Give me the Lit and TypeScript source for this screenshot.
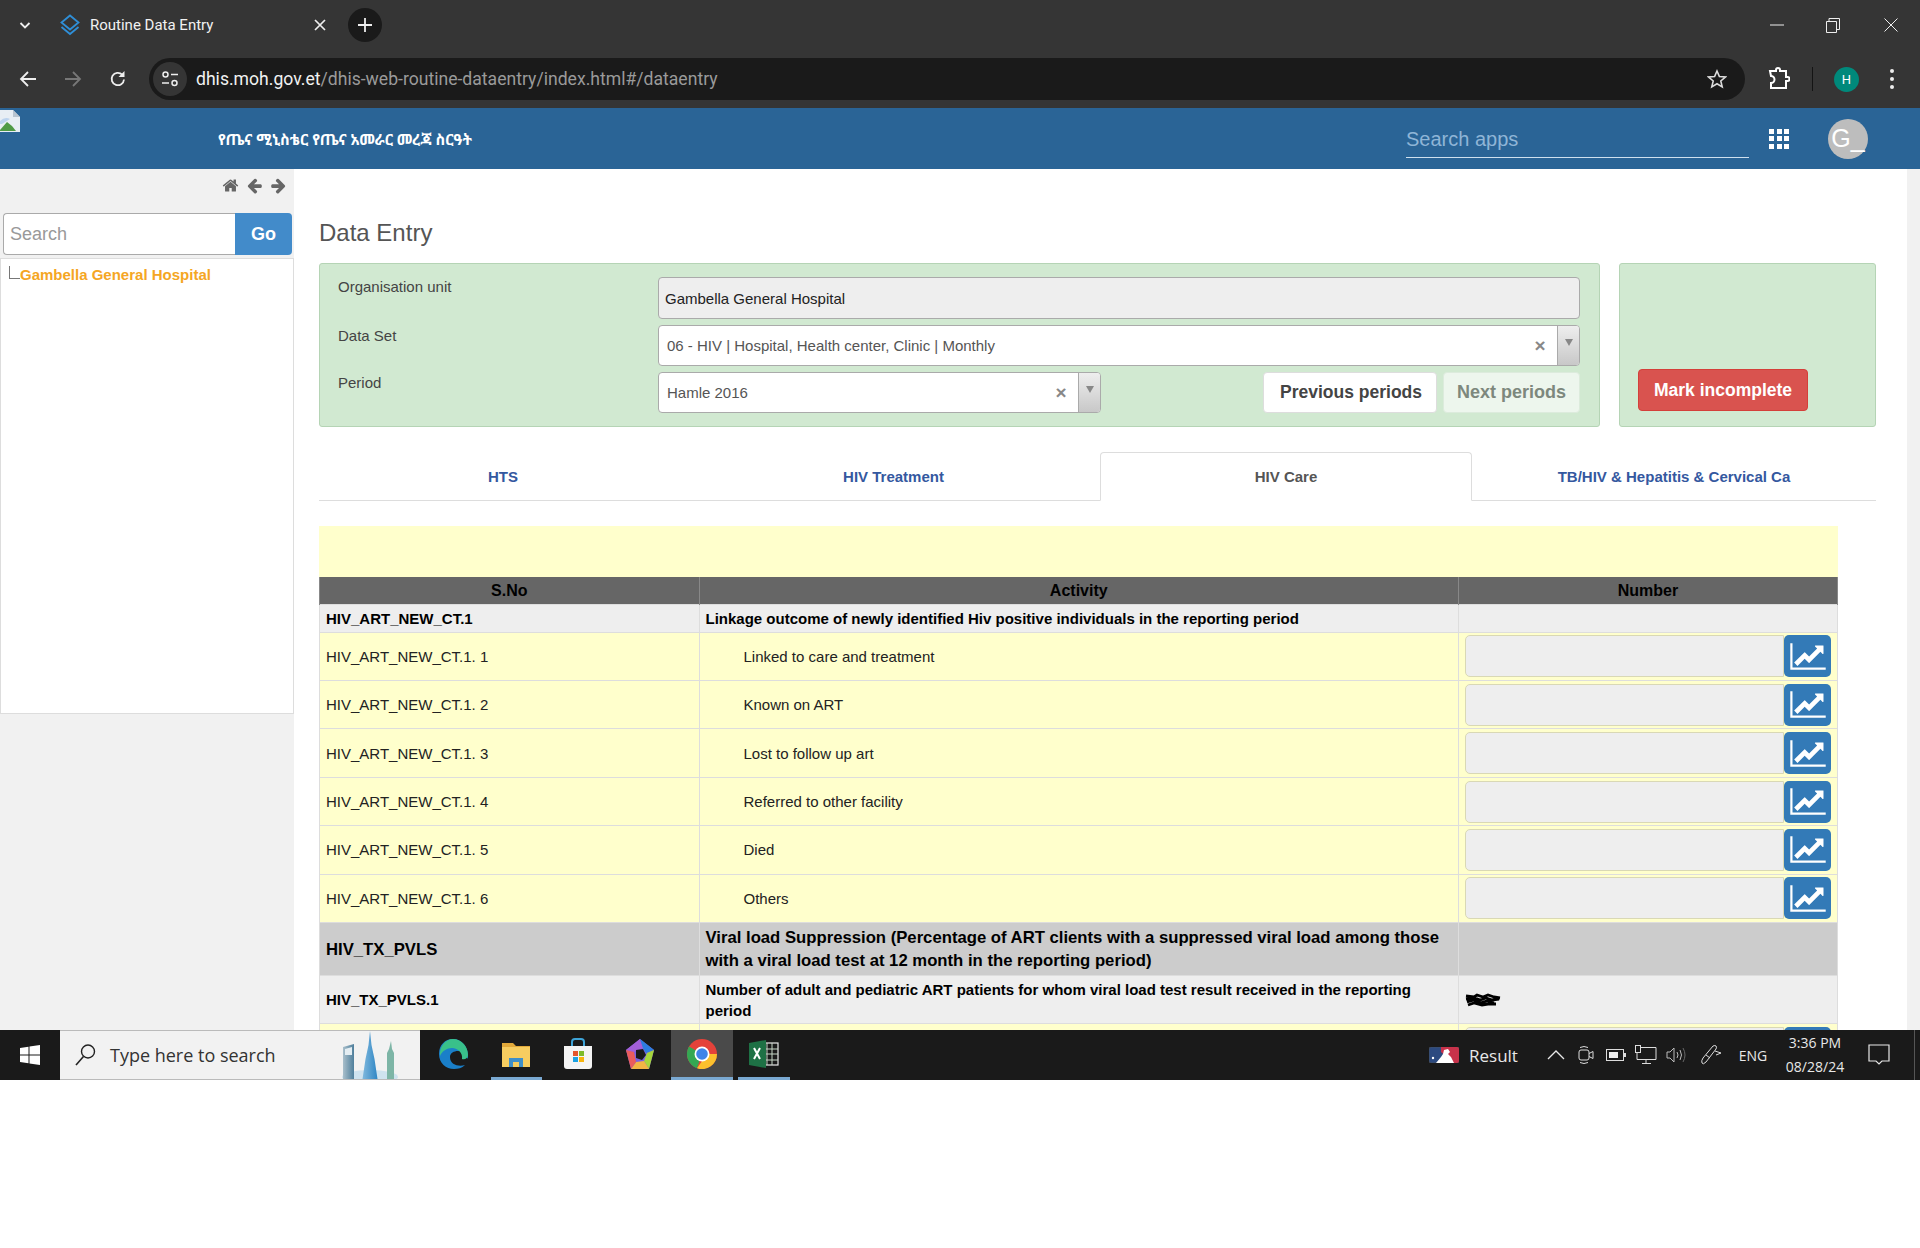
import { LitElement, html, css } from 'lit';
import { customElement } from 'lit/decorators.js';

const LINE_CHART = 'M2048 1536v128h-2048v-1536h128v1408h1920zm-128-1248v435q0 21-19.5 29.5t-35.5-7.5l-121-121-633 633q-10 10-23 10t-23-10l-233-233-416 416-192-192 585-585q10-10 23-10t23 10l233 233 464-464-121-121q-16-16-7.5-35.5t29.5-19.5h435q14 0 23 9t9 23z';
const FA_HOME = 'M1472 992v480q0 26-19 45t-45 19h-384v-384h-256v384h-384q-26 0-45-19t-19-45v-480q0-1 .5-3t.5-3l575-474 575 474q1 2 1 6zm223-69l-62 74q-8 9-21 11h-3q-13 0-21-7l-692-577-692 577q-12 8-24 7-13-2-21-11l-62-74q-8-10-7-23.5t11-21.5l719-599q32-26 76-26t76 26l244 204v-195q0-14 9-23t23-9h192q14 0 23 9t9 23v408l219 182q10 8 11 21.5t-7 23.5z';
const FA_LEFT = 'M1664 896v128q0 53-32.5 90.5t-84.5 37.5h-704l293 294q38 36 38 90t-38 90l-75 76q-37 37-90 37-52 0-91-37l-651-652q-37-37-37-90 0-52 37-91l651-650q38-38 91-38 52 0 90 38l75 74q38 38 38 91t-38 91l-293 293h704q52 0 84.5 37.5t32.5 90.5z';
const FA_RIGHT = 'M1600 960q0 54-37 91l-651 651q-39 37-91 37-51 0-90-37l-75-75q-38-38-38-91t38-91l293-293h-704q-52 0-84.5-37.5t-32.5-90.5v-128q0-53 32.5-90.5t84.5-37.5h704l-293-294q-38-36-38-90t38-90l75-75q38-38 90-38 53 0 91 38l651 651q37 35 37 90z';

const ART_ROWS = [
  'Linked to care and treatment',
  'Known on ART',
  'Lost to follow up art',
  'Referred to other facility',
  'Died',
  'Others',
];

@customElement('app-root')
export class AppRoot extends LitElement {
  static styles = css`
    :host {
      display: block;
      width: 1920px;
      height: 1248px;
      background: #fff;
      font-family: "Liberation Sans", Arial, sans-serif;
      overflow: hidden;
    }

    svg { display: block; }

    /* browser frame */
    .browser { height: 108px; background: #353535; color: #fff; }
    .tabstrip { height: 50px; display: flex; align-items: center; }
    .icon-box { display: flex; align-items: center; justify-content: center; flex: none; }
    .tab-list { width: 50px; height: 50px; }
    .tab {
      width: 290px;
      display: flex;
      align-items: center;
      padding-left: 10px;
      box-sizing: border-box;
      font: 15px Roboto, sans-serif;
      color: #f1f1f1;
    }
    .tab .title { margin-left: 10px; flex: 1; }
    .tab .x { width: 40px; }
    .newtab { width: 34px; height: 34px; margin-left: 8px; border-radius: 50%; background: #1a1a1a; }
    .winctl { margin-left: auto; display: flex; padding-right: 1px; }
    .winctl .icon-box { width: 56px; height: 40px; }
    .winctl .icon-box:last-child { margin-left: 2px; }

    .toolbar { height: 58px; display: flex; align-items: center; }
    .nav { width: 45px; height: 42px; }
    .nav.first { margin-left: 5px; }
    .omnibox {
      width: 1596px;
      height: 42px;
      margin: 0 0 0 9px;
      background: #1a1a1a;
      border-radius: 21px;
      display: flex;
      align-items: center;
      padding: 0 18px 0 4px;
      box-sizing: border-box;
    }
    .site { width: 34px; height: 34px; border-radius: 50%; background: #353535; }
    .url { margin-left: 9px; font: 17.6px Roboto, sans-serif; color: #9a9a9a; white-space: nowrap; }
    .url b { font-weight: 400; color: #f1f1f1; }
    .star { margin-left: auto; }
    .tools { display: flex; align-items: center; }
    .puzzle { width: 34px; margin-left: 17px; }
    .divider { width: 1px; height: 24px; background: #141414; margin: 0 0 0 16px; }
    .profile {
      width: 25px;
      height: 25px;
      margin-left: 21px;
      border-radius: 50%;
      background: #00897b;
      font: 13px Roboto, sans-serif;
    }
    .menu { width: 28px; margin-left: 19px; }

    /* dhis2 app */
    .screen { height: 922px; display: flex; flex-direction: column; overflow: hidden; }
    .appbar { height: 61px; flex: none; background: #2a6496; display: flex; align-items: center; color: #fff; }
    .broken { align-self: flex-start; margin-top: 2px; flex: none; }
    .brand {
      margin-left: 198px;
      width: 400px;
      font: bold 15px "Noto Sans Ethiopic", "DejaVu Sans", "Noto Sans", sans-serif;
      color: #fff;
      white-space: nowrap;
    }
    .appsearch {
      margin-left: 788px;
      width: 343px;
      height: 50px;
      align-self: flex-start;
      box-sizing: border-box;
      border-bottom: 1px solid #cfe0ee;
      font-size: 20px;
      color: #8fb5d6;
      display: flex;
      align-items: center;
      padding-top: 14px;
    }
    .appgrid { margin-left: 20px; width: 20px; display: grid; grid-template-columns: repeat(3, 5px); gap: 2.5px; }
    .appgrid i { height: 5px; background: #fff; display: block; }
    .avatar {
      margin-left: 39px;
      width: 40px;
      height: 40px;
      border-radius: 50%;
      background: #bdbdbd;
      color: #fff;
      font-size: 25px;
      display: flex;
      align-items: center;
      justify-content: center;
    }

    .content { flex: 1; display: flex; min-height: 0; }
    .side { width: 294px; flex: none; background: #f1f1f1; box-sizing: border-box; }
    .side-tools { display: flex; justify-content: flex-end; align-items: center; gap: 7px; padding: 4px 7px 0 0; box-sizing: border-box; height: 29px; }
    .side-search { display: flex; margin: 15px 2px 0 3px; height: 42px; }
    .side-search .field {
      flex: 1;
      background: #fff;
      border: 1px solid #aaa;
      border-right: none;
      border-radius: 4px 0 0 4px;
      color: #999;
      font-size: 18px;
      padding-left: 6px;
      display: flex;
      align-items: center;
    }
    .side-search .go {
      width: 57px;
      background: #428bca;
      color: #fff;
      font-weight: bold;
      font-size: 18px;
      border-radius: 0 4px 4px 0;
      display: flex;
      align-items: center;
      justify-content: center;
    }
    .tree {
      margin-top: 3px;
      height: 456px;
      background: #fff;
      border: 1px solid #ddd;
      box-sizing: border-box;
      display: flex;
      padding: 7px 0 0 8px;
      font-size: 15px;
      font-weight: bold;
      color: #f5a623;
    }
    .tree .elbow { width: 11px; height: 13px; border-left: 1px solid #777; border-bottom: 1px solid #777; box-sizing: border-box; }

    .main { flex: 1; background: #fff; padding-left: 25px; min-width: 0; overflow: hidden; }
    .scrollbar { width: 13px; flex: none; background: #f1f1f1; }
    h2 { margin: 49px 0 15px; font-size: 24px; line-height: 30px; font-weight: 400; color: #555; }
    .panels { display: flex; gap: 19px; }
    .panel { background: #d1e9d1; border: 1px solid #b5d4b5; border-radius: 3px; box-sizing: border-box; height: 164px; }
    .form {
      width: 1281px;
      padding: 13px 19px 13px 18px;
      display: grid;
      grid-template-columns: 320px 1fr;
      grid-template-rows: 42px 41px 41px;
      row-gap: 6px;
      font-size: 15px;
      color: #444;
    }
    .form label { line-height: 20px; }
    .form label.l2, .form label.l3 { padding-top: 1px; }
    .ro {
      background: #eee;
      border: 1px solid #aaa;
      border-radius: 4px;
      color: #222;
      display: flex;
      align-items: center;
      padding-left: 6px;
    }
    .chosen {
      display: flex;
      align-items: center;
      background: #fff;
      border: 1px solid #aaa;
      border-radius: 4px;
      padding-left: 8px;
      box-sizing: border-box;
      color: #555;
      overflow: hidden;
    }
    .chosen .val { flex: 1; }
    .chosen .clear { width: 34px; text-align: center; font-weight: bold; color: #888; font-size: 19px; }
    .chosen .arrow {
      width: 22px;
      align-self: stretch;
      background: linear-gradient(#eeeeee, #c8c8c8);
      border-left: 1px solid #aaa;
      box-sizing: border-box;
      display: flex;
      justify-content: center;
      padding-top: 13px;
    }
    .chosen .arrow i { width: 0; height: 0; border: 4px solid transparent; border-top: 7px solid #888; display: block; }
    .period-row { display: flex; }
    .period-row .chosen { width: 443px; }
    .pager { margin-left: auto; display: flex; gap: 6px; }
    .btn {
      border: 1px solid #ddd;
      background: #fff;
      border-radius: 4px;
      font-weight: bold;
      font-size: 17.5px;
      color: #444;
      display: flex;
      align-items: center;
      justify-content: center;
      box-sizing: border-box;
    }
    .btn.prev { width: 174px; height: 41px; padding-left: 2px; }
    .btn.next { width: 137px; height: 41px; background: #edf6ed; color: #7d887d; border-color: #dcebdc; font-size: 18px; }
    .side-panel { width: 257px; display: flex; align-items: flex-end; padding: 0 0 15px 18px; }
    .btn.mark { width: 170px; height: 42px; background: #d9534f; border-color: #d43f3a; color: #fff; }

    .tabs { display: flex; margin-top: 25px; width: 1557px; height: 49px; border-bottom: 1px solid #ddd; box-sizing: border-box; }
    .tabs a {
      display: flex;
      align-items: center;
      justify-content: center;
      font-size: 15px;
      font-weight: bold;
      color: #34589f;
      box-sizing: border-box;
    }
    .tabs a.on {
      height: 49px;
      background: #fff;
      border: 1px solid #ddd;
      border-bottom-color: #fff;
      border-radius: 4px 4px 0 0;
      color: #555;
    }

    .band { margin-top: 25px; width: 1519px; height: 51px; background: #ffffcc; }
    table { width: 1519px; table-layout: fixed; border-collapse: collapse; font-size: 15px; color: #222; }
    col.c1 { width: 379.5px; }
    col.c2 { width: 759.5px; }
    td, th { border: 1px solid #ddd; padding: 0 6px; box-sizing: border-box; }
    th { height: 27px; background: #666; color: #000; font-size: 16px; border-color: #888; border-top: none; border-bottom: none; padding-top: 2px; }
    tr.head td { height: 28px; background: #eee; font-weight: bold; color: #000; }
    tr.item td { height: 48.45px; background: #ffffcc; }
    tr.item td.sub { padding-left: 44px; }
    tr.section td { height: 53px; background: #ccc; font-weight: bold; color: #000; font-size: 16.7px; line-height: 23px; }
    tr.info td { height: 48px; background: #eee; font-weight: bold; color: #000; line-height: 21px; }
    .num { display: flex; height: 42px; }
    .num .box { flex: 1; background: #eee; border: 1px solid #d9d8b5; border-radius: 5px 0 0 5px; box-sizing: border-box; }
    .num .chart {
      width: 47px;
      background: #337ab7;
      border-radius: 5px;
      display: flex;
      align-items: center;
      justify-content: center;
      flex: none;
    }

    /* windows taskbar */
    .taskbar {
      height: 50px;
      background: #1a1a1a;
      display: flex;
      align-items: stretch;
      color: #e8e8e8;
      font-family: "Open Sans", sans-serif;
    }
    .start { width: 60px; }
    .winsearch {
      width: 360px;
      flex: none;
      background: #f2f2f2;
      border: 1px solid #bbb;
      border-width: 1px 0;
      box-sizing: border-box;
      display: flex;
      align-items: center;
      color: #333;
      font-size: 18px;
      padding-left: 15px;
      overflow: hidden;
    }
    .winsearch .hint { margin-left: 14px; flex: 1; white-space: nowrap; }
    .winsearch svg.town { align-self: flex-end; margin-right: 22px; }
    .pins { display: flex; margin-left: 3px; }
    .pin { width: 62px; box-sizing: border-box; border-bottom: 3px solid transparent; }
    .pin.open { border-bottom-color: #7aa9d2; }
    .pin.short {
      background: linear-gradient(#7aa9d2, #7aa9d2) center bottom / 51px 3px no-repeat;
      background-origin: border-box;
      background-clip: border-box;
    }
    .pin.xl { margin-left: 5px; width: 52px; }
    .pin.active { background: #4a4a4a; }
    .tray { margin-left: auto; display: flex; align-items: center; }
    .tray .result { font-size: 17px; margin-left: 10px; width: 72px; }
    .tray .t { width: 30px; }
    .tray .t.pen { margin-left: 5px; }
    .tray .eng { font-size: 14px; width: 42px; margin-left: 6px; text-align: center; }
    .clock { width: 80px; text-align: center; font-size: 14px; line-height: 24px; margin-left: 1px; }
    .notify { width: 48px; }
    .edge-line { width: 1px; height: 50px; background: #555; margin: 0 5px 0 11px; }
    .blank { height: 168px; background: #fff; }
  `;

  private chrome() {
    return html`
      <div class="browser">
        <div class="tabstrip">
          <div class="icon-box tab-list">
            <svg width="14" height="14" viewBox="0 0 14 14"><path d="M2.5 5l4.5 4.5L11.500 5" fill="none" stroke="#eee" stroke-width="1.800"/></svg>
          </div>
          <div class="tab">
            <svg width="20" height="22" viewBox="0 0 20 22"><path d="M10 1.500l8.500 7L10 15.500l-8.500-7z M1.500 13L10 20l8.500-7" fill="none" stroke="#2f8fd8" stroke-width="1.800"/></svg>
            <span class="title">Routine Data Entry</span>
            <div class="icon-box x"><svg width="12" height="12" viewBox="0 0 12 12"><path d="M1 1l10 10M11 1L1 11" stroke="#eee" stroke-width="1.700"/></svg></div>
          </div>
          <div class="icon-box newtab">
            <svg width="16" height="16" viewBox="0 0 16 16"><path d="M8 1v14M1 8h14" stroke="#eee" stroke-width="1.800"/></svg>
          </div>
          <div class="winctl">
            <div class="icon-box"><svg width="14" height="2" viewBox="0 0 14 2"><path d="M0 1h14" stroke="#eee"/></svg></div>
            <div class="icon-box"><svg width="14" height="15" viewBox="0 0 14 15"><path d="M.5 3.500h10v11H.5zM3 3.500V.5h10.500v11h-3" fill="none" stroke="#eee"/></svg></div>
            <div class="icon-box"><svg width="14" height="14" viewBox="0 0 14 14"><path d="M.5.5l13 13M13.500.5l-13 13" stroke="#eee"/></svg></div>
          </div>
        </div>
        <div class="toolbar">
          <div class="icon-box nav first"><svg width="18" height="18" viewBox="0 0 18 18"><path d="M17 9H2M9 2L2 9l7 7" fill="none" stroke="#eee" stroke-width="1.800"/></svg></div>
          <div class="icon-box nav"><svg width="18" height="18" viewBox="0 0 18 18"><path d="M1 9h15M9 2l7 7-7 7" fill="none" stroke="#777" stroke-width="1.800"/></svg></div>
          <div class="icon-box nav"><svg width="18" height="18" viewBox="0 0 18 18"><path d="M15 9.500A6.200 6.200 0 1 1 13.200 4.600" fill="none" stroke="#eee" stroke-width="1.800"/><path d="M15.500 1v6h-6z" fill="#eee"/></svg></div>
          <div class="omnibox">
            <div class="icon-box site">
              <svg width="18" height="18" viewBox="0 0 18 18"><circle cx="4.500" cy="4.500" r="2.500" fill="none" stroke="#eee" stroke-width="1.500"/><path d="M10 4.500h7M1 13h7" stroke="#eee" stroke-width="1.500"/><circle cx="13.500" cy="13" r="2.500" fill="none" stroke="#eee" stroke-width="1.500"/></svg>
            </div>
            <div class="url"><b>dhis.moh.gov.et</b>/dhis-web-routine-dataentry/index.html#/dataentry</div>
            <svg class="star" width="20" height="20" viewBox="0 0 20 20"><path d="M10 2l2.400 5.500 6 .5-4.600 4 1.400 5.900L10 14.800 4.800 17.900 6.200 12 1.600 8l6-.5z" fill="none" stroke="#ddd" stroke-width="1.600"/></svg>
          </div>
          <div class="tools">
            <div class="icon-box puzzle">
              <svg width="22" height="24" viewBox="0 0 22 24"><path d="M2 4h6V3a2 2 0 0 1 4 0v1h6v6h1.500a2 2 0 0 1 0 4H18v7H3v-5a3 3 0 0 0 0-7z" fill="none" stroke="#fff" stroke-width="2"/></svg>
            </div>
            <div class="divider"></div>
            <div class="icon-box profile">H</div>
            <div class="icon-box menu">
              <svg width="4" height="20" viewBox="0 0 4 20"><circle cx="2" cy="2" r="2" fill="#eee"/><circle cx="2" cy="10" r="2" fill="#eee"/><circle cx="2" cy="18" r="2" fill="#eee"/></svg>
            </div>
          </div>
        </div>
      </div>
    `;
  }

  private appbar() {
    return html`
      <div class="appbar">
        <svg class="broken" width="20" height="22" viewBox="0 0 20 22">
          <path d="M0 0h13l7 7v15H0z" fill="#e8eef4"/>
          <path d="M13 0l7 7h-7z" fill="#b8c4d0"/>
          <path d="M0 20l7-8 5 4 4 5H0z" fill="#4f9a45"/>
          <path d="M0 11q5-5 10-2l-8 5H0z" fill="#bcd3ee"/>
        </svg>
        <div class="brand">የጤና ሚኒስቴር የጤና አመራር መረጃ ስርዓት</div>
        <div class="appsearch">Search apps</div>
        <div class="appgrid">${Array.from({ length: 9 }, () => html`<i></i>`)}</div>
        <div class="avatar">G_</div>
      </div>
    `;
  }

  private sidebar() {
    return html`
      <div class="side">
        <div class="side-tools">
          <svg width="17" height="17" viewBox="0 0 1792 1792"><path d=${FA_HOME} fill="#666"/></svg>
          <svg width="17" height="17" viewBox="0 0 1792 1792"><path d=${FA_LEFT} fill="#666"/></svg>
          <svg width="17" height="17" viewBox="0 0 1792 1792"><path d=${FA_RIGHT} fill="#666"/></svg>
        </div>
        <div class="side-search">
          <div class="field">Search</div>
          <div class="go">Go</div>
        </div>
        <div class="tree">
          <div class="elbow"></div>
          <span>Gambella General Hospital</span>
        </div>
      </div>
    `;
  }

  private numberCell() {
    return html`
      <div class="num">
        <div class="box"></div>
        <div class="chart">
          <svg width="36" height="31" viewBox="0 0 2048 1792"><path d=${LINE_CHART} fill="#fff"/></svg>
        </div>
      </div>
    `;
  }

  private dataTable() {
    return html`
      <table>
        <colgroup><col class="c1" /><col class="c2" /><col /></colgroup>
        <tr>
          <th>S.No</th>
          <th>Activity</th>
          <th>Number</th>
        </tr>
        <tr class="head">
          <td>HIV_ART_NEW_CT.1</td>
          <td>Linkage outcome of newly identified Hiv positive individuals in the reporting period</td>
          <td></td>
        </tr>
        ${ART_ROWS.map(
          (name, i) => html`
            <tr class="item">
              <td>HIV_ART_NEW_CT.1. ${i + 1}</td>
              <td class="sub">${name}</td>
              <td>${this.numberCell()}</td>
            </tr>
          `
        )}
        <tr class="section">
          <td>HIV_TX_PVLS</td>
          <td>Viral load Suppression (Percentage of ART clients with a suppressed viral load among those with a viral load test at 12 month in the reporting period)</td>
          <td></td>
        </tr>
        <tr class="info">
          <td>HIV_TX_PVLS.1</td>
          <td>Number of adult and pediatric ART patients for whom viral load test result received in the reporting period</td>
          <td>
            <svg width="36" height="14" viewBox="0 0 36 14">
              <path d="M1 3l8 1 3-2 6 2 5-2 6 2 6 1M1 6l9-1 5 2 6-2 6 2 7-1M2 9l7-2 6 3 7-2 7 2M3 12l6-2 8 2 6-1 8 0" fill="none" stroke="#000" stroke-width="2.800"/>
            </svg>
          </td>
        </tr>
        <tr class="item">
          <td></td>
          <td></td>
          <td>${this.numberCell()}</td>
        </tr>
      </table>
    `;
  }

  private mainArea() {
    return html`
      <div class="main">
        <h2>Data Entry</h2>
        <div class="panels">
          <div class="panel form">
            <label>Organisation unit</label>
            <div class="ro">Gambella General Hospital</div>
            <label class="l2">Data Set</label>
            <div class="chosen">
              <span class="val">06 - HIV | Hospital, Health center, Clinic | Monthly</span>
              <span class="clear">×</span>
              <span class="arrow"><i></i></span>
            </div>
            <label class="l3">Period</label>
            <div class="period-row">
              <div class="chosen">
                <span class="val">Hamle 2016</span>
                <span class="clear">×</span>
                <span class="arrow"><i></i></span>
              </div>
              <div class="pager">
                <div class="btn prev">Previous periods</div>
                <div class="btn next">Next periods</div>
              </div>
            </div>
          </div>
          <div class="panel side-panel">
            <div class="btn mark">Mark incomplete</div>
          </div>
        </div>
        <div class="tabs">
          <a style="width:368px">HTS</a>
          <a style="width:413px">HIV Treatment</a>
          <a class="on" style="width:372px">HIV Care</a>
          <a style="width:404px">TB/HIV &amp; Hepatitis &amp; Cervical Ca</a>
        </div>
        <div class="band"></div>
        ${this.dataTable()}
      </div>
    `;
  }

  private taskbar() {
    return html`
      <div class="taskbar">
        <div class="icon-box start">
          <svg width="20" height="20" viewBox="0 0 20 20"><path d="M0 3l8.500-1.200v7.700H0zM9.500 1.600L20 0v9.500H9.500zM0 10.500h8.500v7.700L0 17zM9.500 10.500H20V20L9.500 18.400z" fill="#fff"/></svg>
        </div>
        <div class="winsearch">
          <svg width="21" height="24" viewBox="0 0 21 24"><circle cx="13" cy="8.500" r="6.500" fill="none" stroke="#222" stroke-width="1.400"/><path d="M8.500 13.500L1 22" stroke="#222" stroke-width="1.600"/></svg>
          <span class="hint">Type here to search</span>
          <svg class="town" width="56" height="48" viewBox="0 0 56 48">
            <defs>
              <linearGradient id="glass" x1="0" x2="1" y1="0" y2="0"><stop offset="0" stop-color="#7fb8dd"/><stop offset="1" stop-color="#2f86c4"/></linearGradient>
              <linearGradient id="steel" x1="0" x2="1" y1="0" y2="0"><stop offset="0" stop-color="#a9bfcb"/><stop offset="1" stop-color="#4f7f9c"/></linearGradient>
            </defs>
            <ellipse cx="28" cy="46" rx="28" ry="7" fill="#cfe3ef"/>
            <path d="M1 16l11-3v35H1z" fill="url(#steel)"/>
            <path d="M3 18l7-2v8H3z" fill="#e4edf2"/>
            <path d="M28 0l1.500 14 3 14 3 20H20.500l3-20 3-14z" fill="url(#glass)"/>
            <path d="M49 10l1 8 2 4v26h-7V22l2-4z" fill="#7db5a6"/>
          </svg>
        </div>
        <div class="pins">
          <div class="icon-box pin">
            <svg width="32" height="32" viewBox="0 0 32 32">
              <path d="M30 21C31 9 24 1 15 1 7 1 1 7 1 16c0 9 7 15 15 15 4 0 8-1 11-4-6 2-15 0-15-8 0-4 4-6 8-6 5 0 7 3 10 8z" fill="#1a7fc9"/>
              <path d="M15 1c8 0 15 7 15 16 0 3-3 5-6 4 1-6-4-11-10-11C9 10 4 13 2 18 1 9 7 1 15 1z" fill="#39c08a"/>
            </svg>
          </div>
          <div class="icon-box pin short">
            <svg width="30" height="28" viewBox="0 0 30 28">
              <path d="M1 3h11l3 3h14v21H1z" fill="#e2a93a"/>
              <path d="M1 7h28v20H1z" fill="#f7cd60"/>
              <path d="M8 27v-9h14v9h-4v-5h-6v5z" fill="#3f8fc9"/>
            </svg>
          </div>
          <div class="icon-box pin">
            <svg width="30" height="32" viewBox="0 0 30 32">
              <path d="M1 8h28v20a3 3 0 0 1-3 3H4a3 3 0 0 1-3-3z" fill="#f4f4f4"/>
              <path d="M9 8V4a3 3 0 0 1 3-3h6a3 3 0 0 1 3 3v4" fill="none" stroke="#3ea4d8" stroke-width="2"/>
              <rect x="10" y="13" width="5" height="5" fill="#e2552c"/><rect x="16" y="13" width="5" height="5" fill="#7dbb2a"/>
              <rect x="10" y="19" width="5" height="5" fill="#1ba1e2"/><rect x="16" y="19" width="5" height="5" fill="#f6b40e"/>
            </svg>
          </div>
          <div class="icon-box pin">
            <svg width="32" height="32" viewBox="0 0 32 32">
              <path d="M16 1l14 11-5 19H7L2 12z" fill="#7b61e0"/>
              <path d="M2 12L16 1l3 9-9 4z" fill="#a35fd8"/>
              <path d="M16 1l14 11-8 3-3-5z" fill="#2d7de0"/>
              <path d="M30 12l-5 19-5-8 3-8z" fill="#a6d63b"/>
              <path d="M25 31H7l5-7 8-1z" fill="#f2b544"/>
              <path d="M7 31L2 12l8 2 2 10z" fill="#ea5c5c"/>
              <path d="M12 12l7-1 3 6-4 5-6-2z" fill="#1a1a1a"/>
            </svg>
          </div>
          <div class="icon-box pin open active">
            <svg width="32" height="32" viewBox="0 0 32 32">
              <circle cx="16" cy="16" r="15" fill="#e4423a"/>
              <path d="M16 16L3 8.500A15 15 0 0 0 11 30.200z" fill="#34a853"/>
              <path d="M16 16l5 0L11 30.200A15 15 0 0 0 31 16z" fill="#fbc02d"/>
              <circle cx="16" cy="16" r="7.500" fill="#fff"/>
              <circle cx="16" cy="16" r="5.800" fill="#3f84e8"/>
            </svg>
          </div>
          <div class="icon-box pin open xl">
            <svg width="30" height="28" viewBox="0 0 30 28">
              <rect x="12" y="3" width="17" height="22" fill="none" stroke="#e8e8e8" stroke-width="1.200"/>
              <path d="M18 3v22M23 3v22M12 9h17M12 14h17M12 20h17" stroke="#c8d8c8"/>
              <path d="M0 3l17-3v28L0 25z" fill="#1e7145"/>
              <path d="M5 8l6 11M11 8L5 19" stroke="#fff" stroke-width="2"/>
            </svg>
          </div>
        </div>
        <div class="tray">
          <svg width="30" height="16" viewBox="0 0 30 16">
            <rect width="30" height="16" rx="2" fill="#2c4a80" stroke="#555" stroke-width=".6"/>
            <path d="M12 0h16a2 2 0 0 1 2 2v12a2 2 0 0 1-2 2h-4L12 5z" fill="#c8324a"/>
            <path d="M7 16l5-6 2-3 1-4 4-1 2 3-2 2 3 3 3 6z" fill="#fff"/>
            <circle cx="4" cy="11" r="1.200" fill="#fff"/>
          </svg>
          <span class="result">Result</span>
          <div class="icon-box t">
            <svg width="18" height="10" viewBox="0 0 18 10"><path d="M1 9l8-8 8 8" fill="none" stroke="#e8e8e8" stroke-width="1.300"/></svg>
          </div>
          <div class="icon-box t">
            <svg width="16" height="20" viewBox="0 0 16 20"><rect x="1" y="5" width="10" height="10" rx="2" fill="none" stroke="#ddd"/><path d="M11 8.500l4-2v7l-4-2M2 2.500q4-2 8 0M2 17.500q4 2 8 0" fill="none" stroke="#ddd"/></svg>
          </div>
          <div class="icon-box t">
            <svg width="20" height="12" viewBox="0 0 20 12"><rect x=".5" y=".5" width="17" height="11" fill="none" stroke="#ddd"/><rect x="3" y="3" width="9" height="6" fill="#eee"/><rect x="18" y="4" width="2" height="4" fill="#ddd"/></svg>
          </div>
          <div class="icon-box t">
            <svg width="22" height="20" viewBox="0 0 22 20"><path d="M5 2.500h16v12H2V8M11 14.500V18M7 18.500h9" fill="none" stroke="#ddd"/><rect x=".5" y=".5" width="5" height="7" fill="none" stroke="#ddd"/></svg>
          </div>
          <div class="icon-box t">
            <svg width="20" height="16" viewBox="0 0 20 16"><path d="M1 5h3l4-4v14l-4-4H1zM11 5q2 3 0 6M14 3q3 5 0 10" fill="none" stroke="#bbb"/><path d="M17 1q4 7 0 14" fill="none" stroke="#666"/></svg>
          </div>
          <div class="icon-box t pen">
            <svg width="22" height="22" viewBox="0 0 22 22"><path d="M3 14L13 2q2-1 3 0t0 3L6 18q-3 3-4 1t1-5zM6 11l4 3M15 7l6 2-5 2" fill="none" stroke="#ddd"/></svg>
          </div>
          <div class="eng">ENG</div>
          <div class="clock">3:36 PM<br />08/28/24</div>
          <div class="icon-box notify">
            <svg width="22" height="22" viewBox="0 0 22 22"><path d="M1 1h20v16h-7l-3 3-3-3H1z" fill="none" stroke="#e8e8e8" stroke-width="1.200"/></svg>
          </div>
          <div class="edge-line"></div>
        </div>
      </div>
    `;
  }

  render() {
    return html`
      ${this.chrome()}
      <div class="screen">
        ${this.appbar()}
        <div class="content">
          ${this.sidebar()}
          ${this.mainArea()}
          <div class="scrollbar"></div>
        </div>
      </div>
      ${this.taskbar()}
      <div class="blank"></div>
    `;
  }
}
